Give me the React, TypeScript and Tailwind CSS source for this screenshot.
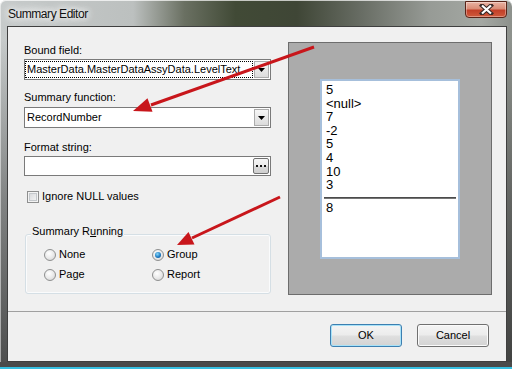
import React from 'react';

const ARROW = '#c8161b';

const DropArrow = () => (
    <svg width="7" height="4" viewBox="0 0 7 4">
        <path d="M0 0h7L3.5 4z" fill="#000"/>
    </svg>
);

const ComboBox = ({text, focused}: { text: string; focused?: boolean }) => (
    <div className="flex h-[21px] w-[247px] border border-[#7a7a7a] bg-white">
        <div
            className={`flex-1 my-[1px] flex items-center pl-[1px] whitespace-nowrap overflow-hidden border ${focused ? 'border-dotted border-black' : 'border-transparent'}`}>
            {text}
        </div>
        <div
            className="w-[15px] my-[1px] mx-[1px] flex items-center justify-center border border-[#acacac] bg-[linear-gradient(to_bottom,#f6f6f6,#dcdcdc)]">
            <DropArrow/>
        </div>
    </div>
);

const Radio = ({label, checked}: { label: string; checked?: boolean }) => (
    <div className="flex items-center h-[13px]">
        <span
            className="w-[12px] h-[12px] rounded-full border border-[#8e8f8f] bg-[radial-gradient(circle_at_40%_35%,#ffffff_0%,#e8e8e8_55%,#cdcdcd_100%)] flex items-center justify-center">
            {checked && (
                <span
                    className="w-[6px] h-[6px] rounded-full bg-[radial-gradient(circle_at_40%_35%,#8ad8f8_0%,#1f7cc4_55%,#0c4a84_100%)]"/>
            )}
        </span>
        <span className="ml-[3px]">{label}</span>
    </div>
);

const DialogButton = ({label, focused}: { label: string; focused?: boolean }) => (
    <button
        className={`w-[72px] h-[23px] rounded-[3px] border text-[11px] text-black bg-[linear-gradient(to_bottom,#f4f4f4_0%,#ececec_48%,#dfdfdf_52%,#d3d3d3_100%)] ${focused ? 'border-[#3c7fb1] shadow-[inset_0_0_0_1px_#a8e2f8]' : 'border-[#707070] shadow-[inset_0_0_0_1px_#fbfbfb]'}`}>
        {label}
    </button>
);

const previewValues = ['5', '<null>', '7', '-2', '5', '4', '10', '3'];

export default function App() {
    return (
        <div
            className="relative w-[512px] h-[369px] overflow-hidden rounded-t-[6px] flex flex-col font-['Liberation_Sans',Arial,sans-serif] text-[11px] leading-[13px] text-black bg-[linear-gradient(to_bottom,rgba(0,0,0,0)_0px,rgba(0,0,0,0)_40px,rgba(45,45,45,0.45)_200px,rgba(45,45,45,0.8)_369px),linear-gradient(to_right,#c6caca_0%,#bcc0bf_26%,#6a7062_36%,#414a36_46%,#3f4636_58%,#666b62_70%,#979b96_84%,#a4a8a3_94%,#8d918c_100%)] shadow-[inset_0_1px_0_rgba(255,255,255,0.7),inset_1px_0_0_rgba(255,255,255,0.5)]">
            {/* title bar */}
            <div className="h-[26px] flex justify-between items-start">
                <span
                    className="ml-[8px] mt-[7px] text-[12px] leading-[14px] tracking-[-0.45px] text-[#111] [text-shadow:0_0_6px_#fff,0_0_10px_#fff,0_0_14px_#fff]">
                    Summary Editor
                </span>
                <div
                    className="mt-[1px] mr-[5px] w-[42px] h-[17px] rounded-b-[4px] border border-[#5a2418] bg-[linear-gradient(to_bottom,#e9b3a3_0%,#da8c76_45%,#c23f28_55%,#cf5a3c_100%)] shadow-[inset_0_0_0_1px_rgba(255,255,255,0.35)] flex items-center justify-center">
                    <svg width="15" height="11" viewBox="0 0 15 11">
                        <path d="M3 1.5L12 9.5M12 1.5L3 9.5" stroke="#3a2a28" strokeWidth="4.2"
                              strokeLinecap="square"/>
                        <path d="M3 1.5L12 9.5M12 1.5L3 9.5" stroke="#fff" strokeWidth="2.2"/>
                    </svg>
                </div>
            </div>

            {/* client area */}
            <div className="ml-[7px] w-[500px] h-[336px] border border-[#3f3f3f] bg-[#f0f0f0] flex flex-col">
                <div className="h-[284px] flex">
                    <div className="w-[263px] pl-[16px] pt-[17px] flex flex-col">
                        <div className="h-[13px]">Bound field:</div>
                        <div className="mt-[2px]">
                            <ComboBox text="MasterData.MasterDataAssyData.LevelText" focused/>
                        </div>
                        <div className="h-[13px] mt-[11px]">Summary function:</div>
                        <div className="mt-[3px]">
                            <ComboBox text="RecordNumber"/>
                        </div>
                        <div className="h-[13px] mt-[13px]">Format string:</div>
                        <div
                            className="mt-[2px] flex justify-end h-[20px] w-[247px] border border-[#7a7a7a] bg-white">
                            <div
                                className="w-[16px] my-[1px] mr-[1px] rounded-[2px] border border-[#707070] bg-[linear-gradient(to_bottom,#f6f6f6_0%,#ebebeb_50%,#dadada_51%,#cfcfcf_100%)] flex items-center justify-center">
                                <svg width="10" height="2" viewBox="0 0 10 2">
                                    <rect x="0" y="0" width="2" height="2" fill="#111"/>
                                    <rect x="4" y="0" width="2" height="2" fill="#111"/>
                                    <rect x="8" y="0" width="2" height="2" fill="#111"/>
                                </svg>
                            </div>
                        </div>
                        <div className="mt-[14px] h-[13px] flex items-center">
                            <span
                                className="ml-[3px] w-[12px] h-[12px] border border-[#8e8f8f] bg-[linear-gradient(135deg,#d2d4d7,#f8f8f8)] shadow-[inset_0_0_0_1px_#f3f3f3,inset_0_0_0_2px_#c4c8cc]"/>
                            <span className="ml-[3px]">Ignore NULL values</span>
                        </div>
                        <div
                            className="relative mt-[31px] ml-[1px] w-[246px] h-[60px] rounded-[3px] border border-[#d5dfe5] shadow-[inset_0_0_0_1px_#fafbfc] pl-[18px] pt-[13px]">
                            <span className="absolute -top-[10px] left-[5px] px-[1px] bg-[#f0f0f0]">
                                Summary R<span className="underline">u</span>nning
                            </span>
                            <div className="grid grid-cols-[108px_auto] gap-y-[7px]">
                                <Radio label="None"/>
                                <Radio label="Group" checked/>
                                <Radio label="Page"/>
                                <Radio label="Report"/>
                            </div>
                        </div>
                    </div>

                    {/* preview */}
                    <div
                        className="ml-[17px] mt-[15px] w-[204px] h-[253px] border border-[#6d6d6d] bg-[#ababab] flex justify-center">
                        <div
                            className="mt-[36px] w-[140px] h-[180px] border-2 border-[#a6bfdb] bg-white pt-[2px] text-[13px] leading-[13.6px] font-['Liberation_Sans',Arial,sans-serif]">
                            {previewValues.map((v, i) => (
                                <div key={i} className="pl-[4px]">{v}</div>
                            ))}
                            <div className="mx-[2px] mt-[5px] h-[2px] bg-[linear-gradient(to_bottom,#363636,#8a8a8a)]"/>
                            <div className="pl-[4px] mt-[2px]">8</div>
                        </div>
                    </div>
                </div>

                <div className="h-[1px] bg-[#a0a0a0]"/>

                <div className="flex-1 flex justify-end items-start pt-[12px] pr-[17px] gap-[15px]">
                    <DialogButton label="OK" focused/>
                    <DialogButton label="Cancel"/>
                </div>
            </div>

            {/* bottom frame */}
            <div className="flex-1 border-b-2 border-[#36c0e2] bg-[#4a4a4a]"/>

            {/* annotation arrows */}
            <svg className="absolute inset-0 pointer-events-none" width="512" height="369" viewBox="0 0 512 369">
                <line x1="314" y1="47" x2="151" y2="105" stroke={ARROW} strokeWidth="3"/>
                <polygon points="133,111 152.5,111.8 147.5,98.2" fill={ARROW}/>
                <line x1="280" y1="197" x2="192" y2="238" stroke={ARROW} strokeWidth="3"/>
                <polygon points="177,245 194.5,244.5 188.5,231.9" fill={ARROW}/>
            </svg>
        </div>
    );
}
